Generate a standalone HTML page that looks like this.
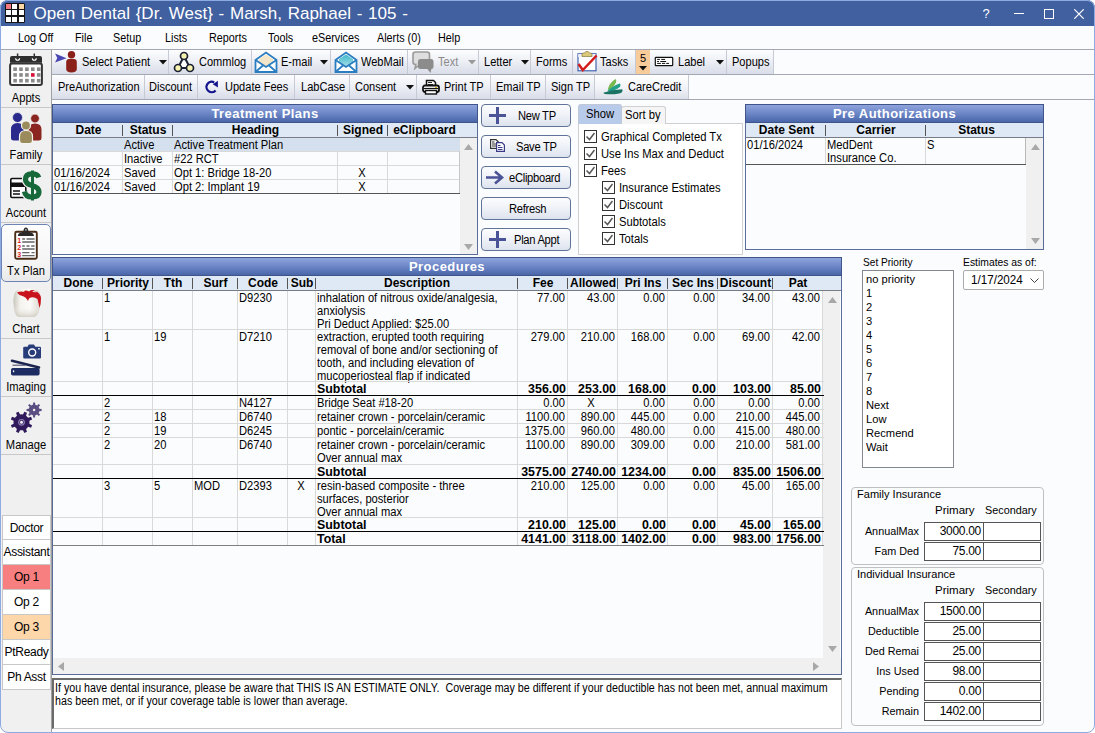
<!DOCTYPE html><html><head><meta charset="utf-8"><style>
*{box-sizing:border-box;margin:0;padding:0}
html,body{width:1095px;height:733px;overflow:hidden;background:#fff}
body{font-family:"Liberation Sans",sans-serif;font-size:11px;color:#000;position:relative}
.abs{position:absolute}
.win{position:absolute;left:0;top:0;width:1095px;height:733px;border-radius:8px;overflow:hidden;background:#fbfcfe}
.wborder{position:absolute;left:0;top:0;width:1095px;height:733px;border:1px solid #8eaae2;border-radius:8px;pointer-events:none}
.title{position:absolute;left:0;top:0;width:1095px;height:26px;background:#4160a0;color:#fff}
.menu{position:absolute;left:0;top:26px;width:1095px;height:24px;background:#fbfcfe;border-bottom:1px solid #a3a8b4}
.mi{position:absolute;top:5px;font-size:12px;transform:scaleX(.9);transform-origin:0 0;white-space:nowrap}
.tb{position:absolute;height:25px;border-bottom:1px solid #a3a8b4}
.btn{position:absolute;top:0;height:24px;background:linear-gradient(#fdfdfe 0%,#eef0f6 45%,#d9dde8 100%);border-right:1px solid #c6cad4;font-size:12px;letter-spacing:-0.3px;white-space:nowrap}
.btn span{position:absolute;top:5px}
.side{position:absolute;left:1px;top:50px;width:51px;height:682px;background:#f0f0f0;border-right:1px solid #a0a0a0}
.mod{position:absolute;left:0;width:50px;height:58px;border-bottom:1px solid #c8c8c8;text-align:center;font-size:12px}
.mod span{position:absolute;left:0;width:50px;top:41px;transform:scaleX(.93)}
.op{position:absolute;left:2px;width:49px;height:25px;border:1px solid #c8c8c8;border-top:none;background:#fff;text-align:center;font-size:12px;line-height:24px;letter-spacing:-0.3px}
.ph{position:absolute;height:19px;background:linear-gradient(#8fa4dd,#6c86c6 50%,#4a66aa);border:1px solid #3f5488;color:#fff;font-weight:bold;font-size:13px;letter-spacing:0.45px;text-align:center;line-height:17px}
.panel{position:absolute;border:1px solid #5a6d9a;background:#fbfcfe}
.ch{position:absolute;height:15px;background:#dfe9f5;border-bottom:1px solid #787c86;font-weight:bold;font-size:12px}
.ch div{position:absolute;top:0;text-align:center;line-height:14px}
.ch i{position:absolute;top:2px;width:1px;height:11px;background:#555}
.cell{position:absolute;white-space:nowrap;line-height:13px;font-size:12px;transform:scaleX(.93);transform-origin:0 0}
.cell.rt{transform-origin:100% 0}
.cell.ct{transform-origin:50% 0}
.r{text-align:right}
.vl{position:absolute;width:1px;background:#d9d9d9}
.hl{position:absolute;height:1px;background:#d9d9d9}
.sb{position:absolute;background:#f0f0f0}
.tbt{position:absolute;font-size:12px;white-space:nowrap;transform:scaleX(.92);transform-origin:0 0}
.tbtn{position:absolute;left:481px;width:90px;height:23px;border:1px solid #5f7498;border-radius:4px;background:linear-gradient(#fdfdfe,#eef1f7 50%,#dde3ee);font-size:12px;letter-spacing:-0.3px}
.cb{position:absolute;width:13px;height:13px;border:1px solid #333;background:#fff}
.cbl{position:absolute;font-size:12px;white-space:nowrap;transform:scaleX(.935);transform-origin:0 0}
.tx{position:absolute;white-space:nowrap}
.ibox{position:absolute;height:19px;border:1px solid #555;background:#fff;text-align:right;padding-right:2px;line-height:17px;font-size:12px;letter-spacing:-0.3px}
</style></head><body>
<div class="win">
<div class="title">
<div class="abs" style="left:5px;top:3px;width:20px;height:20px;background:#141414;border-radius:1.5px"></div>
<div class="abs" style="left:6.0px;top:4.0px;width:5.1px;height:5.1px;background:#f37a80"></div>
<div class="abs" style="left:12.4px;top:4.0px;width:5.1px;height:5.1px;background:#fff"></div>
<div class="abs" style="left:18.8px;top:4.0px;width:5.1px;height:5.1px;background:#fcd8a8"></div>
<div class="abs" style="left:6.0px;top:10.4px;width:5.1px;height:5.1px;background:#fff"></div>
<div class="abs" style="left:12.4px;top:10.4px;width:5.1px;height:5.1px;background:#fff"></div>
<div class="abs" style="left:18.8px;top:10.4px;width:5.1px;height:5.1px;background:#fff"></div>
<div class="abs" style="left:6.0px;top:16.8px;width:5.1px;height:5.1px;background:#fff"></div>
<div class="abs" style="left:12.4px;top:16.8px;width:5.1px;height:5.1px;background:#fff"></div>
<div class="abs" style="left:18.8px;top:16.8px;width:5.1px;height:5.1px;background:#fff"></div>
<div class="abs" style="left:33.5px;top:4px;font-size:17px;word-spacing:1px;white-space:nowrap">Open Dental {Dr. West} - Marsh, Raphael - 105 -</div>
<div class="abs" style="left:982.5px;top:6px;font-size:13px">?</div>
<div class="abs" style="left:1014px;top:13px;width:10px;height:1.2px;background:#fff"></div>
<div class="abs" style="left:1044px;top:9px;width:10px;height:10px;border:1px solid #fff"></div>
<svg class="abs" style="left:1074px;top:9px" width="10" height="10"><path d="M0.3 0.3L9.7 9.7M9.7 0.3L0.3 9.7" stroke="#fff" stroke-width="1.2"/></svg>
</div>
<div class="menu">
<div class="mi" style="left:17.8px">Log Off</div>
<div class="mi" style="left:75.2px">File</div>
<div class="mi" style="left:113.3px">Setup</div>
<div class="mi" style="left:164.7px">Lists</div>
<div class="mi" style="left:208.5px">Reports</div>
<div class="mi" style="left:268px">Tools</div>
<div class="mi" style="left:311.7px">eServices</div>
<div class="mi" style="left:376.5px">Alerts (0)</div>
<div class="mi" style="left:437.8px">Help</div>
</div>
<div class="tb" style="left:52px;top:50px;width:1042px"></div>
<div class="tb" style="left:52px;top:75px;width:1042px"></div>
<div class="btn" style="left:52px;top:50px;width:117px"></div>
<div class="tbt" style="left:82.0px;top:55px;color:#000">Select Patient</div>
<svg class="abs" style="left:159px;top:60px" width="8" height="5"><path d="M0 0H8L4 4.5Z" fill="#111"/></svg>
<div class="btn" style="left:169px;top:50px;width:83px"></div>
<div class="tbt" style="left:199.0px;top:55px;color:#000">Commlog</div>
<div class="btn" style="left:252px;top:50px;width:79px"></div>
<div class="tbt" style="left:280.5px;top:55px;color:#000">E-mail</div>
<svg class="abs" style="left:320px;top:60px" width="8" height="5"><path d="M0 0H8L4 4.5Z" fill="#111"/></svg>
<div class="btn" style="left:331px;top:50px;width:77px"></div>
<div class="tbt" style="left:361.0px;top:55px;color:#000">WebMail</div>
<div class="btn" style="left:408px;top:50px;width:71px"></div>
<div class="tbt" style="left:438.0px;top:55px;color:#8a8a8a">Text</div>
<svg class="abs" style="left:468px;top:60px" width="8" height="5"><path d="M0 0H8L4 4.5Z" fill="#9a9a9a"/></svg>
<div class="btn" style="left:479px;top:50px;width:52px"></div>
<div class="tbt" style="left:484.0px;top:55px;color:#000">Letter</div>
<svg class="abs" style="left:521px;top:60px" width="8" height="5"><path d="M0 0H8L4 4.5Z" fill="#111"/></svg>
<div class="btn" style="left:531px;top:50px;width:42px"></div>
<div class="tbt" style="left:535.5px;top:55px;color:#000">Forms</div>
<div class="btn" style="left:573px;top:50px;width:63px"></div>
<div class="tbt" style="left:600.0px;top:55px;color:#000">Tasks</div>
<div class="btn" style="left:650px;top:50px;width:77px"></div>
<div class="tbt" style="left:677.5px;top:55px;color:#000">Label</div>
<svg class="abs" style="left:716px;top:60px" width="8" height="5"><path d="M0 0H8L4 4.5Z" fill="#111"/></svg>
<div class="btn" style="left:727px;top:50px;width:47px"></div>
<div class="tbt" style="left:731.5px;top:55px;color:#000">Popups</div>
<div class="abs" style="left:636px;top:50px;width:14px;height:24px;background:#f8cb9a"></div>
<div class="abs" style="left:636px;top:52px;width:14px;font-size:11px;text-align:center;line-height:13px">5</div>
<svg class="abs" style="left:639px;top:66px" width="8" height="5"><path d="M0 0H8L4 4.5Z" fill="#111"/></svg>
<svg class="abs" style="left:54px;top:51px" width="26" height="23"><path d="M1 2.5L12.5 7.2L1 11.5L3.3 7Z" fill="#4a46b4"/><circle cx="17.5" cy="3.7" r="3.7" fill="#8b1f1a"/><path d="M12.2 18V11Q12.2 8 15.2 8H19.8Q22.8 8 22.8 11V18Q22.8 21.4 17.5 21.4Q12.2 21.4 12.2 18Z" fill="#8b1f1a"/></svg>
<svg class="abs" style="left:173px;top:51px" width="23" height="22"><path d="M11 5L5 17H17Z" fill="#fff" stroke="#1c2233" stroke-width="2"/><circle cx="11" cy="5" r="3.5" fill="#f7f3b0" stroke="#1c2233" stroke-width="1.7"/><circle cx="5" cy="17" r="3.5" fill="#f7f3b0" stroke="#1c2233" stroke-width="1.7"/><circle cx="17" cy="17" r="3.5" fill="#f7f3b0" stroke="#1c2233" stroke-width="1.7"/></svg>
<svg class="abs" style="left:254px;top:51px" width="24" height="22"><path d="M1.5 9L12 1.5L22.5 9V21H1.5Z" fill="#fff" stroke="#2a7dc0" stroke-width="1.8"/><path d="M5 8L12 3.5L19 8V12L12 16L5 12Z" fill="#f3e6c8"/><path d="M1.5 9L12 16L22.5 9M1.5 21L9.5 14M22.5 21L14.5 14" fill="none" stroke="#2a7dc0" stroke-width="1.8"/></svg>
<svg class="abs" style="left:334px;top:51px" width="24" height="22"><path d="M1.5 9L12 1.5L22.5 9V21H1.5Z" fill="#fff" stroke="#2a7dc0" stroke-width="1.8"/><defs><linearGradient id="wm" x1="0" y1="0" x2="0" y2="1"><stop offset="0" stop-color="#3fb8c8"/><stop offset="1" stop-color="#a8e0e8"/></linearGradient></defs><path d="M5 8L12 3.5L19 8V12L12 16L5 12Z" fill="url(#wm)"/><path d="M1.5 9L12 16L22.5 9M1.5 21L9.5 14M22.5 21L14.5 14" fill="none" stroke="#2a7dc0" stroke-width="1.8"/></svg>
<svg class="abs" style="left:412px;top:51px" width="23" height="23"><rect x="1" y="1" width="16.5" height="12.5" rx="2.5" fill="#dedede" stroke="#9a9a9a" stroke-width="1.6"/><path d="M4 13L3 17.5L8.5 13" fill="#dedede" stroke="#9a9a9a" stroke-width="1.6"/><rect x="6" y="8" width="15.5" height="10" rx="2.5" fill="#8c8c8c"/><path d="M15 17.5L18.5 22L19.5 17.5Z" fill="#8c8c8c"/></svg>
<svg class="abs" style="left:577px;top:51px" width="21" height="21"><rect x="1" y="2.8" width="18" height="17" fill="#fff" stroke="#3456a8" stroke-width="1.1"/><path d="M1.2 3H18.6V6H1.2Z" fill="#eef0f6"/><path d="M5 5.5V3.5Q5 2 6.5 2H7.5Q8.5 0.3 10 0.3Q11.5 0.3 12.5 2H13.5Q15 2 15 3.5V5.5Z" fill="#d9c978" stroke="#8a7a40" stroke-width="0.7"/><path d="M1.5 13L5.8 19L19.6 4.5" fill="none" stroke="#d41c1c" stroke-width="2.5"/></svg>
<svg class="abs" style="left:654px;top:56px" width="20" height="11"><rect x="1.3" y="1.3" width="17.4" height="8.4" rx="0.8" fill="#fff" stroke="#111" stroke-width="1.2"/><path d="M3.5 3.4H5.5M7.6 3.4H10.7M3.5 5.5H4.6M6.7 5.5H11.7M3.5 7.4H6.5M8.4 7.4H10.8M12.6 7.4H14.7" stroke="#111" stroke-width="1" stroke-linecap="round"/></svg>
<div class="btn" style="left:52px;top:75px;width:93px;"></div>
<div class="tbt" style="left:57.5px;top:80px">PreAuthorization</div>
<div class="btn" style="left:145px;top:75px;width:53px;"></div>
<div class="tbt" style="left:149.0px;top:80px">Discount</div>
<div class="btn" style="left:198px;top:75px;width:97px;"></div>
<div class="tbt" style="left:225.0px;top:80px">Update Fees</div>
<div class="btn" style="left:295px;top:75px;width:55px;"></div>
<div class="tbt" style="left:301.0px;top:80px">LabCase</div>
<div class="btn" style="left:350px;top:75px;width:67px;"></div>
<div class="tbt" style="left:355.0px;top:80px">Consent</div>
<svg class="abs" style="left:406px;top:85px" width="8" height="5"><path d="M0 0H8L4 4.5Z" fill="#111"/></svg>
<div class="btn" style="left:417px;top:75px;width:74px;"></div>
<div class="tbt" style="left:443.5px;top:80px">Print TP</div>
<div class="btn" style="left:491px;top:75px;width:55px;"></div>
<div class="tbt" style="left:496.0px;top:80px">Email TP</div>
<div class="btn" style="left:546px;top:75px;width:49px;"></div>
<div class="tbt" style="left:550.5px;top:80px">Sign TP</div>
<div class="btn" style="left:595px;top:75px;width:94px;background:linear-gradient(#ffffff,#f3f4f8 50%,#dde0e9);"></div>
<div class="tbt" style="left:628.0px;top:80px">CareCredit</div>
<svg class="abs" style="left:204px;top:80px" width="16" height="14"><path d="M11.6 10.4A5.2 5.2 0 1 1 10.2 2.4" fill="none" stroke="#14148e" stroke-width="2.3"/><path d="M13.9 0.8V7.6L8.8 4.2Z" fill="#14148e"/></svg>
<svg class="abs" style="left:422px;top:79px" width="18" height="16"><path d="M4.5 7V1.5H11.5L13.5 3.5V7" fill="#fff" stroke="#111" stroke-width="1.5"/><path d="M6 3.5H10M6 5.5H11" stroke="#111" stroke-width="0.9"/><rect x="1" y="6.5" width="16" height="6.5" rx="2" fill="#fff" stroke="#111" stroke-width="1.8"/><path d="M2 9.5H16" stroke="#111" stroke-width="1.2"/><rect x="3.5" y="11.5" width="11" height="3.5" fill="#fff" stroke="#111" stroke-width="1.4"/><rect x="13" y="8" width="2" height="1" fill="#d4c020"/></svg>
<svg class="abs" style="left:603px;top:78px" width="21" height="18"><path d="M4.8 11.5Q6 5 12.5 1Q13.8 1.8 13 4.5Q11 9 5.5 12Z" fill="#7ab850"/><path d="M4.5 13Q9 8 16.5 5.5Q18.2 6 17 8.8Q14 12 6 13.8Z" fill="#22a088"/><path d="M0.3 14.8Q9 11.5 19 11.3Q20.3 12 19 14.2Q15 17 1.5 16Z" fill="#1a7262"/></svg>
<div class="side">
<div class="mod" style="top:0px;height:58px"><span>Appts</span></div>
<div class="mod" style="top:57px;height:58px"><span>Family</span></div>
<div class="mod" style="top:115px;height:58px"><span>Account</span></div>
<div class="mod" style="top:231px;height:58px"><span>Chart</span></div>
<div class="mod" style="top:289px;height:58px"><span>Imaging</span></div>
<div class="mod" style="top:347px;height:58px"><span>Manage</span></div>
</div>
<div class="abs" style="left:1px;top:224px;width:50px;height:58px;border:1px solid #6d84b4;border-radius:5px;background:linear-gradient(#fdfdfd,#f4f4f4 70%,#e9e9e9)"></div>
<div class="abs" style="left:1px;top:264px;width:50px;text-align:center;font-size:12px;transform:scaleX(.93)">Tx Plan</div>
<svg class="abs" style="left:9px;top:53px" width="34" height="34">
<rect x="1.1" y="10.5" width="31.8" height="21.5" rx="2" fill="#fff" stroke="#353535" stroke-width="2"/>
<path d="M1 9.8V5Q1 3 3 3H31Q33 3 33 5V9.8Z" fill="#2e2e2e"/>
<path d="M8.6 0.5V5M25.3 0.5V5" stroke="#2e2e2e" stroke-width="1.5"/>
<path d="M6.6 5.2A2 2 0 0 0 10.6 5.2M23.3 5.2A2 2 0 0 0 27.3 5.2" fill="none" stroke="#fff" stroke-width="1.1"/>
<rect x="4.30" y="14.40" width="3.6" height="3.6" fill="#8a8a8a"/><rect x="10.20" y="14.40" width="3.6" height="3.6" fill="#8a8a8a"/><rect x="16.10" y="14.40" width="3.6" height="3.6" fill="#8a8a8a"/><rect x="22.00" y="14.40" width="3.6" height="3.6" fill="#8a8a8a"/><rect x="27.90" y="14.40" width="3.6" height="3.6" fill="#8a8a8a"/><rect x="4.30" y="20.15" width="3.6" height="3.6" fill="#8a8a8a"/><rect x="10.20" y="20.15" width="3.6" height="3.6" fill="#8a8a8a"/><rect x="16.10" y="20.15" width="3.6" height="3.6" fill="#8a8a8a"/><rect x="22.00" y="20.15" width="3.6" height="3.6" fill="#d8103a"/><rect x="27.90" y="20.15" width="3.6" height="3.6" fill="#8a8a8a"/><rect x="4.30" y="25.90" width="3.6" height="3.6" fill="#8a8a8a"/><rect x="10.20" y="25.90" width="3.6" height="3.6" fill="#8a8a8a"/><rect x="16.10" y="25.90" width="3.6" height="3.6" fill="#8a8a8a"/><rect x="22.00" y="25.90" width="3.6" height="3.6" fill="#8a8a8a"/><rect x="27.90" y="25.90" width="3.6" height="3.6" fill="#8a8a8a"/>
</svg>
<svg class="abs" style="left:8px;top:110px" width="36" height="36">
<circle cx="9.5" cy="7.5" r="5" fill="#2a2a8c" stroke="#f0f0f0" stroke-width="0.8"/>
<path d="M3 28V19.5Q3 13 9.5 13Q16 13 16 19.5V28Q16 30.5 13 30.5H6Q3 30.5 3 28Z" fill="#2a2a8c"/>
<circle cx="27" cy="8.5" r="4.4" fill="#8a2520" stroke="#f0f0f0" stroke-width="0.8"/>
<path d="M20.5 28V19.5Q20.5 13.5 27 13.5Q33.5 13.5 33.5 19.5V28Q33.5 30.5 30.5 30.5H23.5Q20.5 30.5 20.5 28Z" fill="#8a2520"/>
<circle cx="18" cy="15.5" r="4.5" fill="#9b8a5c" stroke="#f4f4ee" stroke-width="1.2"/>
<path d="M11.5 31V26.5Q11.5 20.5 18 20.5Q24.5 20.5 24.5 26.5V31Q24.5 33.5 21.5 33.5H14.5Q11.5 33.5 11.5 31Z" fill="#9b8a5c" stroke="#f4f4ee" stroke-width="1.2"/>
</svg>
<svg class="abs" style="left:9px;top:170px" width="34" height="32">
<rect x="1.8" y="8.5" width="15" height="19" rx="1.2" fill="#fff" stroke="#111" stroke-width="1.6"/>
<rect x="1" y="12.5" width="17" height="4.5" fill="#111"/>
<path d="M4 21H11M4 24H11" stroke="#111" stroke-width="1.4"/>
<path d="M23.5 0.5V30.5" stroke="#f0f0f0" stroke-width="5"/>
<path d="M29.8 7.5Q28.5 3.8 23 3.8Q16.5 3.8 16.5 9.5Q16.5 13.8 23 15.5Q30 17.3 30 22Q30 27 23 27Q16.5 27 15.5 21.5" fill="none" stroke="#f0f0f0" stroke-width="7.5"/>
<path d="M23.5 0.5V30.5" stroke="#17693a" stroke-width="3"/>
<path d="M29.8 7.5Q28.5 3.8 23 3.8Q16.5 3.8 16.5 9.5Q16.5 13.8 23 15.5Q30 17.3 30 22Q30 27 23 27Q16.5 27 15.5 21.5" fill="none" stroke="#17693a" stroke-width="5.2"/>
</svg>
<svg class="abs" style="left:12px;top:227px" width="28" height="35">
<rect x="3.2" y="4.7" width="21.6" height="27.1" rx="1.5" fill="#fff" stroke="#4a2e18" stroke-width="1.9"/>
<path d="M5.8 9Q6 6.2 9 5.5L11.3 4.8Q11.8 0.6 13.9 0.6Q16 0.6 16.5 4.8L18.8 5.5Q21.8 6.2 22 9Z" fill="#2a2a2a"/>
<circle cx="13.9" cy="2.8" r="0.9" fill="#bbb"/>
<text x="5.3" y="16" font-family="Liberation Sans" font-weight="bold" font-size="7" fill="#d82222">1</text>
<text x="5.3" y="23" font-family="Liberation Sans" font-weight="bold" font-size="7" fill="#d82222">2</text>
<text x="5.3" y="30" font-family="Liberation Sans" font-weight="bold" font-size="7" fill="#d82222">3</text>
<path d="M10.2 12H13M14.5 12H22.6M10.2 15H22.6M10.2 19H12.8M14.5 19H17.5M19.2 19H22.6M10.2 22H22.6M10.2 25.6H17.5M19.5 25.6H22.6M10.2 28.6H22.6" stroke="#666" stroke-width="1.3"/>
</svg>
<svg class="abs" style="left:12px;top:288px" width="30" height="30">
<defs><linearGradient id="tg" x1="0" y1="0" x2="1" y2="0"><stop offset="0" stop-color="#c9c5bb"/><stop offset="0.25" stop-color="#f4f3ee"/><stop offset="0.6" stop-color="#fbfbf8"/><stop offset="1" stop-color="#d9d5cc"/></linearGradient>
<linearGradient id="tg2" x1="0" y1="0" x2="0" y2="1"><stop offset="0.6" stop-color="#fff" stop-opacity="0"/><stop offset="1" stop-color="#bdb8a8" stop-opacity="0.6"/></linearGradient></defs>
<path d="M2 7Q3 1.5 9 1Q15 0 22 1Q28 2 28.8 8Q29.5 15 27.5 21Q26 28.5 22 29H7Q3 28.5 2 20Q0.5 13 2 7Z" fill="url(#tg)"/>
<path d="M2 7Q3 1.5 9 1Q15 0 22 1Q28 2 28.8 8Q29.5 15 27.5 21Q26 28.5 22 29H7Q3 28.5 2 20Q0.5 13 2 7Z" fill="url(#tg2)"/>
<path d="M5 4.5Q8 3 11 3.5Q14 1.5 17 3.5Q20 1 23 3Q28 4.5 29 10Q29 16 27.5 20Q26.5 15 25.5 11Q21 8 17 10.5L16 13Q14 9 10.5 8Q7 7.5 5 4.5Z" fill="#c8121c"/>
<path d="M9 2.5Q12 1.5 13 3Q11 4.5 9 2.5Z" fill="#f6f2e8"/>
<path d="M20 3Q23 2.5 25 4Q22 5 20 3Z" fill="#f0ece4"/>
</svg>
<svg class="abs" style="left:10px;top:343px" width="33" height="34">
<path d="M13.2 4.8Q13.2 3.8 14.2 3.8H17.5L18.8 1.4H24L25.3 3.8H30Q31 3.8 31 4.8V14.5Q31 15.5 30 15.5H14.2Q13.2 15.5 13.2 14.5Z" fill="#283c7a"/>
<circle cx="22.2" cy="9.5" r="3.5" fill="none" stroke="#fff" stroke-width="1.4"/>
<rect x="28.2" y="5" width="1.5" height="1.5" fill="#fff"/>
<path d="M2 17.8L29 24.5" stroke="#1c2550" stroke-width="2.6" stroke-linecap="round"/>
<path d="M2.5 22.2H15" stroke="#4a5070" stroke-width="1.1"/>
<rect x="1" y="25" width="28.6" height="7.6" rx="1.8" fill="#1e2c64"/>
<rect x="2.9" y="27.4" width="1.3" height="1.8" fill="#fff"/>
</svg>
<svg class="abs" style="left:8px;top:399px" width="36" height="36"><polygon points="24.03,6.01 24.96,5.72 25.15,3.46 27.05,3.46 27.24,5.72 28.17,6.01 29.03,6.46 30.76,4.99 32.11,6.34 30.64,8.07 31.09,8.93 31.38,9.86 33.64,10.05 33.64,11.95 31.38,12.14 31.09,13.07 30.64,13.93 32.11,15.66 30.76,17.01 29.03,15.54 28.17,15.99 27.24,16.28 27.05,18.54 25.15,18.54 24.96,16.28 24.03,15.99 23.17,15.54 21.44,17.01 20.09,15.66 21.56,13.93 21.11,13.07 20.82,12.14 18.56,11.95 18.56,10.05 20.82,9.86 21.11,8.93 21.56,8.07 20.09,6.34 21.44,4.99 23.17,6.46" fill="#5b4f82"/><circle cx="26.1" cy="11" r="1.2" fill="#f0f0f0"/><polygon points="13.50,15.30 14.94,15.43 16.40,12.69 18.95,13.75 18.05,16.72 19.16,17.64 20.08,18.75 23.05,17.85 24.11,20.40 21.37,21.86 21.50,23.30 21.37,24.74 24.11,26.20 23.05,28.75 20.08,27.85 19.16,28.96 18.05,29.88 18.95,32.85 16.40,33.91 14.94,31.17 13.50,31.30 12.06,31.17 10.60,33.91 8.05,32.85 8.95,29.88 7.84,28.96 6.92,27.85 3.95,28.75 2.89,26.20 5.63,24.74 5.50,23.30 5.63,21.86 2.89,20.40 3.95,17.85 6.92,18.75 7.84,17.64 8.95,16.72 8.05,13.75 10.60,12.69 12.06,15.43" fill="#301a5c"/><circle cx="13.5" cy="23.3" r="3.4" fill="#8f7fb0"/><circle cx="13.5" cy="23.3" r="2.2" fill="#3a2466"/><circle cx="13.5" cy="23.3" r="1.5" fill="#f4f0f8"/></svg>
<div class="op" style="top:515px;background:#fff;border-top:1px solid #c8c8c8;">Doctor</div>
<div class="op" style="top:540px;background:#fff;">Assistant</div>
<div class="op" style="top:565px;background:#f77f7f;">Op 1</div>
<div class="op" style="top:590px;background:#fff;">Op 2</div>
<div class="op" style="top:615px;background:#fdd6aa;">Op 3</div>
<div class="op" style="top:640px;background:#fff;">PtReady</div>
<div class="op" style="top:665px;background:#fff;">Ph Asst</div>
<div class="panel" style="left:52px;top:104px;width:426px;height:151px"></div>
<div class="ph" style="left:52px;top:104px;width:426px">Treatment Plans</div>
<div class="ch" style="left:53px;top:123px;width:424px">
<div style="left:1px;width:69px">Date</div>
<i style="left:69px"></i>
<div style="left:70px;width:50px">Status</div>
<i style="left:119px"></i>
<div style="left:120px;width:165px">Heading</div>
<i style="left:284px"></i>
<div style="left:285px;width:50px">Signed</div>
<i style="left:334px"></i>
<div style="left:335px;width:73px">eClipboard</div>
</div>
<div class="sb" style="left:460px;top:138px;width:17px;height:116px"></div>
<svg class="abs" style="left:464px;top:144px" width="9" height="6"><path d="M0 6H9L4.5 0Z" fill="#a8a8a8"/></svg>
<svg class="abs" style="left:464px;top:244px" width="9" height="6"><path d="M0 0H9L4.5 6Z" fill="#a8a8a8"/></svg>
<div class="abs" style="left:53px;top:138px;width:407px;height:13px;background:#dae4f0"></div>
<div class="hl" style="left:53px;top:151px;width:407px;"></div>
<div class="cell" style="left:54px;top:139px"></div>
<div class="cell" style="left:124px;top:139px">Active</div>
<div class="cell" style="left:174px;top:139px">Active Treatment Plan</div>
<div class="cell ct" style="left:337px;width:50px;text-align:center;top:139px"></div>
<div class="hl" style="left:53px;top:165px;width:407px;"></div>
<div class="cell" style="left:54px;top:153px"></div>
<div class="cell" style="left:124px;top:153px">Inactive</div>
<div class="cell" style="left:174px;top:153px">#22 RCT</div>
<div class="cell ct" style="left:337px;width:50px;text-align:center;top:153px"></div>
<div class="hl" style="left:53px;top:179px;width:407px;"></div>
<div class="cell" style="left:54px;top:167px">01/16/2024</div>
<div class="cell" style="left:124px;top:167px">Saved</div>
<div class="cell" style="left:174px;top:167px">Opt 1: Bridge 18-20</div>
<div class="cell ct" style="left:337px;width:50px;text-align:center;top:167px">X</div>
<div class="hl" style="left:53px;top:193px;width:407px;background:#555"></div>
<div class="cell" style="left:54px;top:181px">01/16/2024</div>
<div class="cell" style="left:124px;top:181px">Saved</div>
<div class="cell" style="left:174px;top:181px">Opt 2: Implant 19</div>
<div class="cell ct" style="left:337px;width:50px;text-align:center;top:181px">X</div>
<div class="vl" style="left:122px;top:138px;height:55px"></div>
<div class="vl" style="left:172px;top:138px;height:55px"></div>
<div class="vl" style="left:337px;top:138px;height:55px"></div>
<div class="vl" style="left:387px;top:138px;height:55px"></div>
<div class="vl" style="left:459px;top:138px;height:55px;background:#c8c8c8"></div>
<div class="abs" style="left:53px;top:138px;width:407px;height:13px;background:#d5e0ee"></div>
<div class="cell" style="left:124px;top:139px">Active</div>
<div class="cell" style="left:174px;top:139px">Active Treatment Plan</div>
<div class="tbtn" style="top:104px"><span class="abs" style="left:36px;top:4px;transform:scaleX(.93);transform-origin:0 0;white-space:nowrap">New TP</span></div>
<svg class="abs" style="left:489px;top:107px" width="17" height="17"><path d="M8.5 0V17M0 8.5H17" stroke="#4a5298" stroke-width="3"/></svg>
<div class="tbtn" style="top:135px"><span class="abs" style="left:34px;top:4px;transform:scaleX(.93);transform-origin:0 0;white-space:nowrap">Save TP</span></div>
<svg class="abs" style="left:490px;top:139px" width="16" height="14"><path d="M0.6 0.6H6L8.4 3V9.4H0.6Z" fill="#fff" stroke="#333" stroke-width="1.2"/><path d="M2 3H4.5M2 5H6M2 7H6" stroke="#333" stroke-width="1"/><path d="M6.6 3.6H12L14.4 6V12.4H6.6Z" fill="#fff" stroke="#3a3a88" stroke-width="1.2"/><path d="M8 6.5H10.5M8 8.5H12.5M8 10.5H12.5" stroke="#3a3a88" stroke-width="1"/></svg>
<div class="tbtn" style="top:166px"><span class="abs" style="left:26.5px;top:4px;transform:scaleX(.93);transform-origin:0 0;white-space:nowrap">eClipboard</span></div>
<svg class="abs" style="left:485px;top:170px" width="20" height="15"><path d="M1 7.5H16M10 1.5L17 7.5L10 13.5" fill="none" stroke="#4a5298" stroke-width="2.6"/></svg>
<div class="tbtn" style="top:197px"><span class="abs" style="left:26.5px;top:4px;transform:scaleX(.93);transform-origin:0 0;white-space:nowrap">Refresh</span></div>
<div class="tbtn" style="top:228px"><span class="abs" style="left:32px;top:4px;transform:scaleX(.93);transform-origin:0 0;white-space:nowrap">Plan Appt</span></div>
<svg class="abs" style="left:489px;top:231px" width="17" height="17"><path d="M8.5 0V17M0 8.5H17" stroke="#4a5298" stroke-width="3"/></svg>
<div class="abs" style="left:578px;top:123px;width:165px;height:132px;border:1px solid #d0d0d0;background:#fff"></div>
<div class="abs" style="left:621px;top:106px;width:45px;height:18px;border:1px solid #d0d0d0;border-bottom:none;background:#f5f5f5;border-radius:3px 3px 0 0"></div>
<div class="abs" style="left:578px;top:104px;width:44px;height:20px;background:#b9cbea;border:1px solid #c0c8d8;border-bottom:none;border-radius:3px 3px 0 0"></div>
<div class="cbl" style="left:586px;top:107px">Show</div>
<div class="cbl" style="left:625px;top:108px">Sort by</div>
<div class="cb" style="left:584px;top:130px"></div>
<svg class="abs" style="left:586px;top:132px" width="9" height="9"><path d="M0.5 4.5L3.5 7.5L8.5 1" fill="none" stroke="#555" stroke-width="1.5"/></svg>
<div class="cbl" style="left:601px;top:130px">Graphical Completed Tx</div>
<div class="cb" style="left:584px;top:147px"></div>
<svg class="abs" style="left:586px;top:149px" width="9" height="9"><path d="M0.5 4.5L3.5 7.5L8.5 1" fill="none" stroke="#555" stroke-width="1.5"/></svg>
<div class="cbl" style="left:601px;top:147px">Use Ins Max and Deduct</div>
<div class="cb" style="left:584px;top:164px"></div>
<svg class="abs" style="left:586px;top:166px" width="9" height="9"><path d="M0.5 4.5L3.5 7.5L8.5 1" fill="none" stroke="#555" stroke-width="1.5"/></svg>
<div class="cbl" style="left:601px;top:164px">Fees</div>
<div class="cb" style="left:602px;top:181px"></div>
<svg class="abs" style="left:604px;top:183px" width="9" height="9"><path d="M0.5 4.5L3.5 7.5L8.5 1" fill="none" stroke="#555" stroke-width="1.5"/></svg>
<div class="cbl" style="left:619px;top:181px">Insurance Estimates</div>
<div class="cb" style="left:602px;top:198px"></div>
<svg class="abs" style="left:604px;top:200px" width="9" height="9"><path d="M0.5 4.5L3.5 7.5L8.5 1" fill="none" stroke="#555" stroke-width="1.5"/></svg>
<div class="cbl" style="left:619px;top:198px">Discount</div>
<div class="cb" style="left:602px;top:215px"></div>
<svg class="abs" style="left:604px;top:217px" width="9" height="9"><path d="M0.5 4.5L3.5 7.5L8.5 1" fill="none" stroke="#555" stroke-width="1.5"/></svg>
<div class="cbl" style="left:619px;top:215px">Subtotals</div>
<div class="cb" style="left:602px;top:232px"></div>
<svg class="abs" style="left:604px;top:234px" width="9" height="9"><path d="M0.5 4.5L3.5 7.5L8.5 1" fill="none" stroke="#555" stroke-width="1.5"/></svg>
<div class="cbl" style="left:619px;top:232px">Totals</div>
<div class="panel" style="left:745px;top:104px;width:299px;height:146px"></div>
<div class="ph" style="left:745px;top:104px;width:299px">Pre Authorizations</div>
<div class="ch" style="left:746px;top:123px;width:297px">
<div style="left:1px;width:79px">Date Sent</div>
<i style="left:79px"></i>
<div style="left:80px;width:100px">Carrier</div>
<i style="left:179px"></i>
<div style="left:180px;width:101px">Status</div>
</div>
<div class="sb" style="left:1026px;top:138px;width:17px;height:111px"></div>
<svg class="abs" style="left:1031px;top:144px" width="9" height="6"><path d="M0 6H9L4.5 0Z" fill="#a8a8a8"/></svg>
<svg class="abs" style="left:1031px;top:238px" width="9" height="6"><path d="M0 0H9L4.5 6Z" fill="#a8a8a8"/></svg>
<div class="cell" style="left:747px;top:139px">01/16/2024</div>
<div class="cell" style="left:827px;top:139px">MedDent<br>Insurance Co.</div>
<div class="cell" style="left:927px;top:139px">S</div>
<div class="abs" style="left:746px;top:164px;width:280px;height:1px;background:#555"></div>
<div class="vl" style="left:825px;top:138px;height:26px"></div>
<div class="vl" style="left:925px;top:138px;height:26px"></div>
<div class="vl" style="left:1025px;top:138px;height:26px;background:#b8b8b8"></div>
<div class="panel" style="left:52px;top:257px;width:790px;height:418px"></div>
<div class="ph" style="left:52px;top:257px;width:790px">Procedures</div>
<div class="ch" style="left:53px;top:276px;width:788px">
<div style="left:1px;width:49px">Done</div>
<i style="left:49px"></i>
<div style="left:50px;width:50px">Priority</div>
<i style="left:99px"></i>
<div style="left:100px;width:40px">Tth</div>
<i style="left:139px"></i>
<div style="left:140px;width:45px">Surf</div>
<i style="left:184px"></i>
<div style="left:185px;width:50px">Code</div>
<i style="left:234px"></i>
<div style="left:235px;width:28px">Sub</div>
<i style="left:262px"></i>
<div style="left:263px;width:202px">Description</div>
<i style="left:464px"></i>
<div style="left:465px;width:50px">Fee</div>
<i style="left:514px"></i>
<div style="left:515px;width:50px">Allowed</div>
<i style="left:564px"></i>
<div style="left:565px;width:50px">Pri Ins</div>
<i style="left:614px"></i>
<div style="left:615px;width:50px">Sec Ins</div>
<i style="left:664px"></i>
<div style="left:665px;width:55px">Discount</div>
<i style="left:719px"></i>
<div style="left:720px;width:50px">Pat</div>
</div>
<div class="sb" style="left:823px;top:291px;width:17px;height:367px"></div>
<svg class="abs" style="left:828px;top:297px" width="9" height="6"><path d="M0 6H9L4.5 0Z" fill="#a8a8a8"/></svg>
<svg class="abs" style="left:828px;top:646px" width="9" height="6"><path d="M0 0H9L4.5 6Z" fill="#a8a8a8"/></svg>
<div class="sb" style="left:53px;top:658px;width:770px;height:16px"></div>
<svg class="abs" style="left:58px;top:662px" width="6" height="9"><path d="M6 0V9L0 4.5Z" fill="#a8a8a8"/></svg>
<svg class="abs" style="left:813px;top:662px" width="6" height="9"><path d="M0 0V9L6 4.5Z" fill="#a8a8a8"/></svg>
<div class="sb" style="left:823px;top:658px;width:18px;height:16px"></div>
<div class="vl" style="left:102px;top:291px;height:254px"></div>
<div class="vl" style="left:152px;top:291px;height:254px"></div>
<div class="vl" style="left:192px;top:291px;height:254px"></div>
<div class="vl" style="left:237px;top:291px;height:254px"></div>
<div class="vl" style="left:287px;top:291px;height:254px"></div>
<div class="vl" style="left:315px;top:291px;height:254px"></div>
<div class="vl" style="left:517px;top:291px;height:254px"></div>
<div class="vl" style="left:567px;top:291px;height:254px"></div>
<div class="vl" style="left:617px;top:291px;height:254px"></div>
<div class="vl" style="left:667px;top:291px;height:254px"></div>
<div class="vl" style="left:717px;top:291px;height:254px"></div>
<div class="vl" style="left:772px;top:291px;height:254px"></div>
<div class="vl" style="left:822px;top:291px;height:254px"></div>
<div class="cell" style="left:104px;top:292px">1</div>
<div class="cell" style="left:239px;top:292px">D9230</div>
<div class="cell" style="left:317px;top:292px;">inhalation of nitrous oxide/analgesia,<br>anxiolysis<br>Pri Deduct Applied: $25.00</div>
<div class="cell rt" style="left:517px;width:48px;top:292px;text-align:right;">77.00</div>
<div class="cell rt" style="left:567px;width:48px;top:292px;text-align:right;">43.00</div>
<div class="cell rt" style="left:617px;width:48px;top:292px;text-align:right;">0.00</div>
<div class="cell rt" style="left:667px;width:48px;top:292px;text-align:right;">0.00</div>
<div class="cell rt" style="left:717px;width:53px;top:292px;text-align:right;">34.00</div>
<div class="cell rt" style="left:772px;width:48px;top:292px;text-align:right;">43.00</div>
<div class="hl" style="left:53px;top:329px;width:771px;background:#d9d9d9"></div>
<div class="cell" style="left:104px;top:331px">1</div>
<div class="cell" style="left:154px;top:331px">19</div>
<div class="cell" style="left:239px;top:331px">D7210</div>
<div class="cell" style="left:317px;top:331px;">extraction, erupted tooth requiring<br>removal of bone and/or sectioning of<br>tooth, and including elevation of<br>mucoperiosteal flap if indicated</div>
<div class="cell rt" style="left:517px;width:48px;top:331px;text-align:right;">279.00</div>
<div class="cell rt" style="left:567px;width:48px;top:331px;text-align:right;">210.00</div>
<div class="cell rt" style="left:617px;width:48px;top:331px;text-align:right;">168.00</div>
<div class="cell rt" style="left:667px;width:48px;top:331px;text-align:right;">0.00</div>
<div class="cell rt" style="left:717px;width:53px;top:331px;text-align:right;">69.00</div>
<div class="cell rt" style="left:772px;width:48px;top:331px;text-align:right;">42.00</div>
<div class="hl" style="left:53px;top:381px;width:771px;background:#d9d9d9"></div>
<div class="cell" style="left:317px;top:383px;font-weight:bold;font-size:12.4px;transform:none;">Subtotal</div>
<div class="cell rt" style="left:517px;width:49px;top:383px;text-align:right;font-weight:bold;font-size:12.4px;transform:none;">356.00</div>
<div class="cell rt" style="left:567px;width:49px;top:383px;text-align:right;font-weight:bold;font-size:12.4px;transform:none;">253.00</div>
<div class="cell rt" style="left:617px;width:49px;top:383px;text-align:right;font-weight:bold;font-size:12.4px;transform:none;">168.00</div>
<div class="cell rt" style="left:667px;width:49px;top:383px;text-align:right;font-weight:bold;font-size:12.4px;transform:none;">0.00</div>
<div class="cell rt" style="left:717px;width:54px;top:383px;text-align:right;font-weight:bold;font-size:12.4px;transform:none;">103.00</div>
<div class="cell rt" style="left:772px;width:49px;top:383px;text-align:right;font-weight:bold;font-size:12.4px;transform:none;">85.00</div>
<div class="hl" style="left:53px;top:395px;width:771px;background:#000"></div>
<div class="cell" style="left:104px;top:397px">2</div>
<div class="cell" style="left:239px;top:397px">N4127</div>
<div class="cell" style="left:317px;top:397px;">Bridge Seat #18-20</div>
<div class="cell rt" style="left:517px;width:48px;top:397px;text-align:right;">0.00</div>
<div class="cell ct" style="left:567px;width:48px;top:397px;text-align:center;">X</div>
<div class="cell rt" style="left:617px;width:48px;top:397px;text-align:right;">0.00</div>
<div class="cell rt" style="left:667px;width:48px;top:397px;text-align:right;">0.00</div>
<div class="cell rt" style="left:717px;width:53px;top:397px;text-align:right;">0.00</div>
<div class="cell rt" style="left:772px;width:48px;top:397px;text-align:right;">0.00</div>
<div class="hl" style="left:53px;top:409px;width:771px;background:#d9d9d9"></div>
<div class="cell" style="left:104px;top:411px">2</div>
<div class="cell" style="left:154px;top:411px">18</div>
<div class="cell" style="left:239px;top:411px">D6740</div>
<div class="cell" style="left:317px;top:411px;">retainer crown - porcelain/ceramic</div>
<div class="cell rt" style="left:517px;width:48px;top:411px;text-align:right;">1100.00</div>
<div class="cell rt" style="left:567px;width:48px;top:411px;text-align:right;">890.00</div>
<div class="cell rt" style="left:617px;width:48px;top:411px;text-align:right;">445.00</div>
<div class="cell rt" style="left:667px;width:48px;top:411px;text-align:right;">0.00</div>
<div class="cell rt" style="left:717px;width:53px;top:411px;text-align:right;">210.00</div>
<div class="cell rt" style="left:772px;width:48px;top:411px;text-align:right;">445.00</div>
<div class="hl" style="left:53px;top:423px;width:771px;background:#d9d9d9"></div>
<div class="cell" style="left:104px;top:425px">2</div>
<div class="cell" style="left:154px;top:425px">19</div>
<div class="cell" style="left:239px;top:425px">D6245</div>
<div class="cell" style="left:317px;top:425px;">pontic - porcelain/ceramic</div>
<div class="cell rt" style="left:517px;width:48px;top:425px;text-align:right;">1375.00</div>
<div class="cell rt" style="left:567px;width:48px;top:425px;text-align:right;">960.00</div>
<div class="cell rt" style="left:617px;width:48px;top:425px;text-align:right;">480.00</div>
<div class="cell rt" style="left:667px;width:48px;top:425px;text-align:right;">0.00</div>
<div class="cell rt" style="left:717px;width:53px;top:425px;text-align:right;">415.00</div>
<div class="cell rt" style="left:772px;width:48px;top:425px;text-align:right;">480.00</div>
<div class="hl" style="left:53px;top:437px;width:771px;background:#d9d9d9"></div>
<div class="cell" style="left:104px;top:439px">2</div>
<div class="cell" style="left:154px;top:439px">20</div>
<div class="cell" style="left:239px;top:439px">D6740</div>
<div class="cell" style="left:317px;top:439px;">retainer crown - porcelain/ceramic<br>Over annual max</div>
<div class="cell rt" style="left:517px;width:48px;top:439px;text-align:right;">1100.00</div>
<div class="cell rt" style="left:567px;width:48px;top:439px;text-align:right;">890.00</div>
<div class="cell rt" style="left:617px;width:48px;top:439px;text-align:right;">309.00</div>
<div class="cell rt" style="left:667px;width:48px;top:439px;text-align:right;">0.00</div>
<div class="cell rt" style="left:717px;width:53px;top:439px;text-align:right;">210.00</div>
<div class="cell rt" style="left:772px;width:48px;top:439px;text-align:right;">581.00</div>
<div class="hl" style="left:53px;top:464px;width:771px;background:#d9d9d9"></div>
<div class="cell" style="left:317px;top:466px;font-weight:bold;font-size:12.4px;transform:none;">Subtotal</div>
<div class="cell rt" style="left:517px;width:49px;top:466px;text-align:right;font-weight:bold;font-size:12.4px;transform:none;">3575.00</div>
<div class="cell rt" style="left:567px;width:49px;top:466px;text-align:right;font-weight:bold;font-size:12.4px;transform:none;">2740.00</div>
<div class="cell rt" style="left:617px;width:49px;top:466px;text-align:right;font-weight:bold;font-size:12.4px;transform:none;">1234.00</div>
<div class="cell rt" style="left:667px;width:49px;top:466px;text-align:right;font-weight:bold;font-size:12.4px;transform:none;">0.00</div>
<div class="cell rt" style="left:717px;width:54px;top:466px;text-align:right;font-weight:bold;font-size:12.4px;transform:none;">835.00</div>
<div class="cell rt" style="left:772px;width:49px;top:466px;text-align:right;font-weight:bold;font-size:12.4px;transform:none;">1506.00</div>
<div class="hl" style="left:53px;top:478px;width:771px;background:#000"></div>
<div class="cell" style="left:104px;top:480px">3</div>
<div class="cell" style="left:154px;top:480px">5</div>
<div class="cell" style="left:194px;top:480px">MOD</div>
<div class="cell" style="left:239px;top:480px">D2393</div>
<div class="cell ct" style="left:287px;width:28px;text-align:center;top:480px">X</div>
<div class="cell" style="left:317px;top:480px;">resin-based composite - three<br>surfaces, posterior<br>Over annual max</div>
<div class="cell rt" style="left:517px;width:48px;top:480px;text-align:right;">210.00</div>
<div class="cell rt" style="left:567px;width:48px;top:480px;text-align:right;">125.00</div>
<div class="cell rt" style="left:617px;width:48px;top:480px;text-align:right;">0.00</div>
<div class="cell rt" style="left:667px;width:48px;top:480px;text-align:right;">0.00</div>
<div class="cell rt" style="left:717px;width:53px;top:480px;text-align:right;">45.00</div>
<div class="cell rt" style="left:772px;width:48px;top:480px;text-align:right;">165.00</div>
<div class="hl" style="left:53px;top:517px;width:771px;background:#d9d9d9"></div>
<div class="cell" style="left:317px;top:519px;font-weight:bold;font-size:12.4px;transform:none;">Subtotal</div>
<div class="cell rt" style="left:517px;width:49px;top:519px;text-align:right;font-weight:bold;font-size:12.4px;transform:none;">210.00</div>
<div class="cell rt" style="left:567px;width:49px;top:519px;text-align:right;font-weight:bold;font-size:12.4px;transform:none;">125.00</div>
<div class="cell rt" style="left:617px;width:49px;top:519px;text-align:right;font-weight:bold;font-size:12.4px;transform:none;">0.00</div>
<div class="cell rt" style="left:667px;width:49px;top:519px;text-align:right;font-weight:bold;font-size:12.4px;transform:none;">0.00</div>
<div class="cell rt" style="left:717px;width:54px;top:519px;text-align:right;font-weight:bold;font-size:12.4px;transform:none;">45.00</div>
<div class="cell rt" style="left:772px;width:49px;top:519px;text-align:right;font-weight:bold;font-size:12.4px;transform:none;">165.00</div>
<div class="hl" style="left:53px;top:531px;width:771px;background:#000"></div>
<div class="cell" style="left:317px;top:533px;font-weight:bold;font-size:12.4px;transform:none;">Total</div>
<div class="cell rt" style="left:517px;width:49px;top:533px;text-align:right;font-weight:bold;font-size:12.4px;transform:none;">4141.00</div>
<div class="cell rt" style="left:567px;width:49px;top:533px;text-align:right;font-weight:bold;font-size:12.4px;transform:none;">3118.00</div>
<div class="cell rt" style="left:617px;width:49px;top:533px;text-align:right;font-weight:bold;font-size:12.4px;transform:none;">1402.00</div>
<div class="cell rt" style="left:667px;width:49px;top:533px;text-align:right;font-weight:bold;font-size:12.4px;transform:none;">0.00</div>
<div class="cell rt" style="left:717px;width:54px;top:533px;text-align:right;font-weight:bold;font-size:12.4px;transform:none;">983.00</div>
<div class="cell rt" style="left:772px;width:49px;top:533px;text-align:right;font-weight:bold;font-size:12.4px;transform:none;">1756.00</div>
<div class="hl" style="left:53px;top:545px;width:771px;background:#808080"></div>
<div class="abs" style="left:52px;top:678px;width:790px;height:51px;border:1px solid #c8c8c8;border-top:2px solid #6a6a6a;border-left:2px solid #6a6a6a;background:#fff"></div>
<div class="tx" style="left:55px;top:682px;font-size:12px;line-height:12.6px;transform:scaleX(.89);transform-origin:0 0">If you have dental insurance, please be aware that THIS IS AN ESTIMATE ONLY.&nbsp; Coverage may be different if your deductible has not been met, annual maximum<br>has been met, or if your coverage table is lower than average.</div>
<div class="tx" style="left:863px;top:256px;font-size:11.5px;transform:scaleX(.88);transform-origin:0 0">Set Priority</div>
<div class="abs" style="left:862px;top:270px;width:92px;height:198px;border:1px solid #828790;background:#fff"></div>
<div class="tx" style="left:866px;top:273px;font-size:11.5px;transform:scaleX(.97);transform-origin:0 0">no priority</div>
<div class="tx" style="left:866px;top:287px;font-size:11.5px;transform:scaleX(.97);transform-origin:0 0">1</div>
<div class="tx" style="left:866px;top:301px;font-size:11.5px;transform:scaleX(.97);transform-origin:0 0">2</div>
<div class="tx" style="left:866px;top:315px;font-size:11.5px;transform:scaleX(.97);transform-origin:0 0">3</div>
<div class="tx" style="left:866px;top:329px;font-size:11.5px;transform:scaleX(.97);transform-origin:0 0">4</div>
<div class="tx" style="left:866px;top:343px;font-size:11.5px;transform:scaleX(.97);transform-origin:0 0">5</div>
<div class="tx" style="left:866px;top:357px;font-size:11.5px;transform:scaleX(.97);transform-origin:0 0">6</div>
<div class="tx" style="left:866px;top:371px;font-size:11.5px;transform:scaleX(.97);transform-origin:0 0">7</div>
<div class="tx" style="left:866px;top:385px;font-size:11.5px;transform:scaleX(.97);transform-origin:0 0">8</div>
<div class="tx" style="left:866px;top:399px;font-size:11.5px;transform:scaleX(.97);transform-origin:0 0">Next</div>
<div class="tx" style="left:866px;top:413px;font-size:11.5px;transform:scaleX(.97);transform-origin:0 0">Low</div>
<div class="tx" style="left:866px;top:427px;font-size:11.5px;transform:scaleX(.97);transform-origin:0 0">Recmend</div>
<div class="tx" style="left:866px;top:441px;font-size:11.5px;transform:scaleX(.97);transform-origin:0 0">Wait</div>
<div class="tx" style="left:963px;top:256px;font-size:11.5px;transform:scaleX(.9);transform-origin:0 0">Estimates as of:</div>
<div class="abs" style="left:963px;top:270px;width:81px;height:20px;border:1px solid #acacac;border-radius:2px;background:#fff"></div>
<div class="tx" style="left:971px;top:273px;font-size:12px;transform:scaleX(.97);transform-origin:0 0">1/17/2024</div>
<svg class="abs" style="left:1030px;top:278px" width="9" height="6"><path d="M0.5 0.5L4.5 4.5L8.5 0.5" fill="none" stroke="#444" stroke-width="1"/></svg>
<div class="abs" style="left:851px;top:487px;width:193px;height:78px;border:1px solid #c0c0c0;border-radius:4px"></div>
<div class="tx" style="left:857px;top:488px;font-size:11.5px;transform:scaleX(.96);transform-origin:0 0">Family Insurance</div>
<div class="abs" style="left:851px;top:567px;width:193px;height:159px;border:1px solid #c0c0c0;border-radius:4px"></div>
<div class="tx" style="left:857px;top:568px;font-size:11.5px;transform:scaleX(.96);transform-origin:0 0">Individual Insurance</div>
<div class="tx" style="left:935px;top:504px;font-size:11.5px">Primary</div>
<div class="tx" style="left:985px;top:504px;font-size:11.5px;transform:scaleX(.94);transform-origin:0 0">Secondary</div>
<div class="tx" style="left:935px;top:584px;font-size:11.5px">Primary</div>
<div class="tx" style="left:985px;top:584px;font-size:11.5px;transform:scaleX(.94);transform-origin:0 0">Secondary</div>
<div class="tx r" style="left:849px;width:70px;top:525px;font-size:11.5px;transform:scaleX(.94);transform-origin:100% 0">AnnualMax</div>
<div class="ibox" style="left:924px;top:522px;width:60px">3000.00</div>
<div class="ibox" style="left:983px;top:522px;width:58px"></div>
<div class="tx r" style="left:849px;width:70px;top:545px;font-size:11.5px;transform:scaleX(.94);transform-origin:100% 0">Fam Ded</div>
<div class="ibox" style="left:924px;top:542px;width:60px">75.00</div>
<div class="ibox" style="left:983px;top:542px;width:58px"></div>
<div class="tx r" style="left:849px;width:70px;top:605px;font-size:11.5px;transform:scaleX(.94);transform-origin:100% 0">AnnualMax</div>
<div class="ibox" style="left:924px;top:602px;width:60px">1500.00</div>
<div class="ibox" style="left:983px;top:602px;width:58px"></div>
<div class="tx r" style="left:849px;width:70px;top:625px;font-size:11.5px;transform:scaleX(.94);transform-origin:100% 0">Deductible</div>
<div class="ibox" style="left:924px;top:622px;width:60px">25.00</div>
<div class="ibox" style="left:983px;top:622px;width:58px"></div>
<div class="tx r" style="left:849px;width:70px;top:645px;font-size:11.5px;transform:scaleX(.94);transform-origin:100% 0">Ded Remai</div>
<div class="ibox" style="left:924px;top:642px;width:60px">25.00</div>
<div class="ibox" style="left:983px;top:642px;width:58px"></div>
<div class="tx r" style="left:849px;width:70px;top:665px;font-size:11.5px;transform:scaleX(.94);transform-origin:100% 0">Ins Used</div>
<div class="ibox" style="left:924px;top:662px;width:60px">98.00</div>
<div class="ibox" style="left:983px;top:662px;width:58px"></div>
<div class="tx r" style="left:849px;width:70px;top:685px;font-size:11.5px;transform:scaleX(.94);transform-origin:100% 0">Pending</div>
<div class="ibox" style="left:924px;top:682px;width:60px">0.00</div>
<div class="ibox" style="left:983px;top:682px;width:58px"></div>
<div class="tx r" style="left:849px;width:70px;top:705px;font-size:11.5px;transform:scaleX(.94);transform-origin:100% 0">Remain</div>
<div class="ibox" style="left:924px;top:702px;width:60px">1402.00</div>
<div class="ibox" style="left:983px;top:702px;width:58px"></div>
</div>
<div class="wborder"></div>
</body></html>
